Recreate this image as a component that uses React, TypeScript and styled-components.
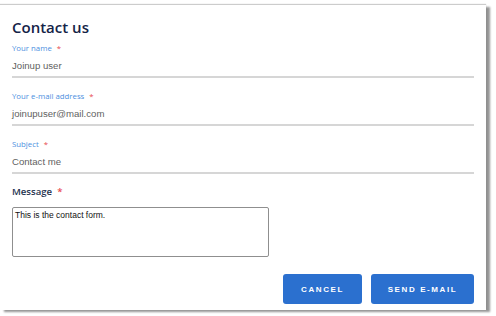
import React from "react";
import styled, { createGlobalStyle } from "styled-components";

const GlobalStyle = createGlobalStyle`
  html, body {
    margin: 0;
    padding: 0;
    background: #ffffff;
  }
`;

const Page = styled.div`
  width: 496px;
  height: 316px;
  padding-top: 5px;
  box-sizing: border-box;
  overflow: hidden;
`;

const Card = styled.form`
  width: 486px;
  height: 305px;
  box-sizing: border-box;
  background: #ffffff;
  padding: 12px 12px 0 12px;
  box-shadow: 0 -1px 1px rgba(0, 0, 0, 0.2), 4px 2px 2px rgba(0, 0, 0, 0.42);
  display: flex;
  flex-direction: column;
`;

const Heading = styled.h1`
  margin: 0;
  font-family: "Open Sans", "Noto Sans", sans-serif;
  font-weight: 600;
  font-size: 15px;
  line-height: 20px;
  color: #142347;
`;

const Field = styled.div<{ $first?: boolean }>`
  width: 462px;
  display: flex;
  flex-direction: column;
  border-bottom: 2px solid #d6d6d6;
  margin-top: ${(p) => (p.$first ? "5px" : "12px")};
`;

const Label = styled.label`
  font-family: "Open Sans", "Noto Sans", sans-serif;
  font-size: 7.8px;
  line-height: 12px;
  color: #4d8fe0;
`;

const Required = styled.span`
  color: #e8484f;
  margin-left: 5px;
`;

const Value = styled.div`
  font-family: "Liberation Sans", Arial, sans-serif;
  font-size: 9.6px;
  line-height: 14px;
  color: #5f5f5f;
  margin-top: 5px;
  padding-bottom: 3px;
`;

const MessageLabel = styled.label`
  margin-top: 11px;
  font-family: "Open Sans", "Noto Sans", sans-serif;
  font-weight: 600;
  font-size: 9.6px;
  line-height: 14px;
  color: #25334f;
`;

const TextArea = styled.div`
  margin-top: 8px;
  width: 257px;
  height: 50px;
  box-sizing: border-box;
  border: 1px solid #8f8f8f;
  border-radius: 2px;
  padding: 2px 2px;
  font-family: "Liberation Sans", Arial, sans-serif;
  font-size: 8.5px;
  line-height: 11px;
  color: #111111;
`;

const Actions = styled.div`
  margin-top: 17px;
  width: 462px;
  display: flex;
  justify-content: flex-end;
  gap: 9px;
`;

const Button = styled.button<{ $w: number }>`
  width: ${(p) => p.$w}px;
  height: 30px;
  border: none;
  border-radius: 3px;
  background: #2b70cf;
  color: #ffffff;
  font-family: "Liberation Sans", Arial, sans-serif;
  font-weight: 700;
  font-size: 8px;
  letter-spacing: 1.6px;
  cursor: pointer;
  padding: 0;
`;

const fields = [
  { label: "Your name", value: "Joinup user" },
  { label: "Your e-mail address", value: "joinupuser@mail.com" },
  { label: "Subject", value: "Contact me" },
];

export default function App() {
  return (
    <>
      <GlobalStyle />
      <Page>
        <Card>
          <Heading>Contact us</Heading>
          {fields.map((f, i) => (
            <Field key={f.label} $first={i === 0}>
              <Label>
                {f.label}
                <Required>*</Required>
              </Label>
              <Value>{f.value}</Value>
            </Field>
          ))}
          <MessageLabel>
            Message<Required>*</Required>
          </MessageLabel>
          <TextArea>This is the contact form.</TextArea>
          <Actions>
            <Button type="button" $w={79}>CANCEL</Button>
            <Button type="button" $w={103}>SEND E-MAIL</Button>
          </Actions>
        </Card>
      </Page>
    </>
  );
}
